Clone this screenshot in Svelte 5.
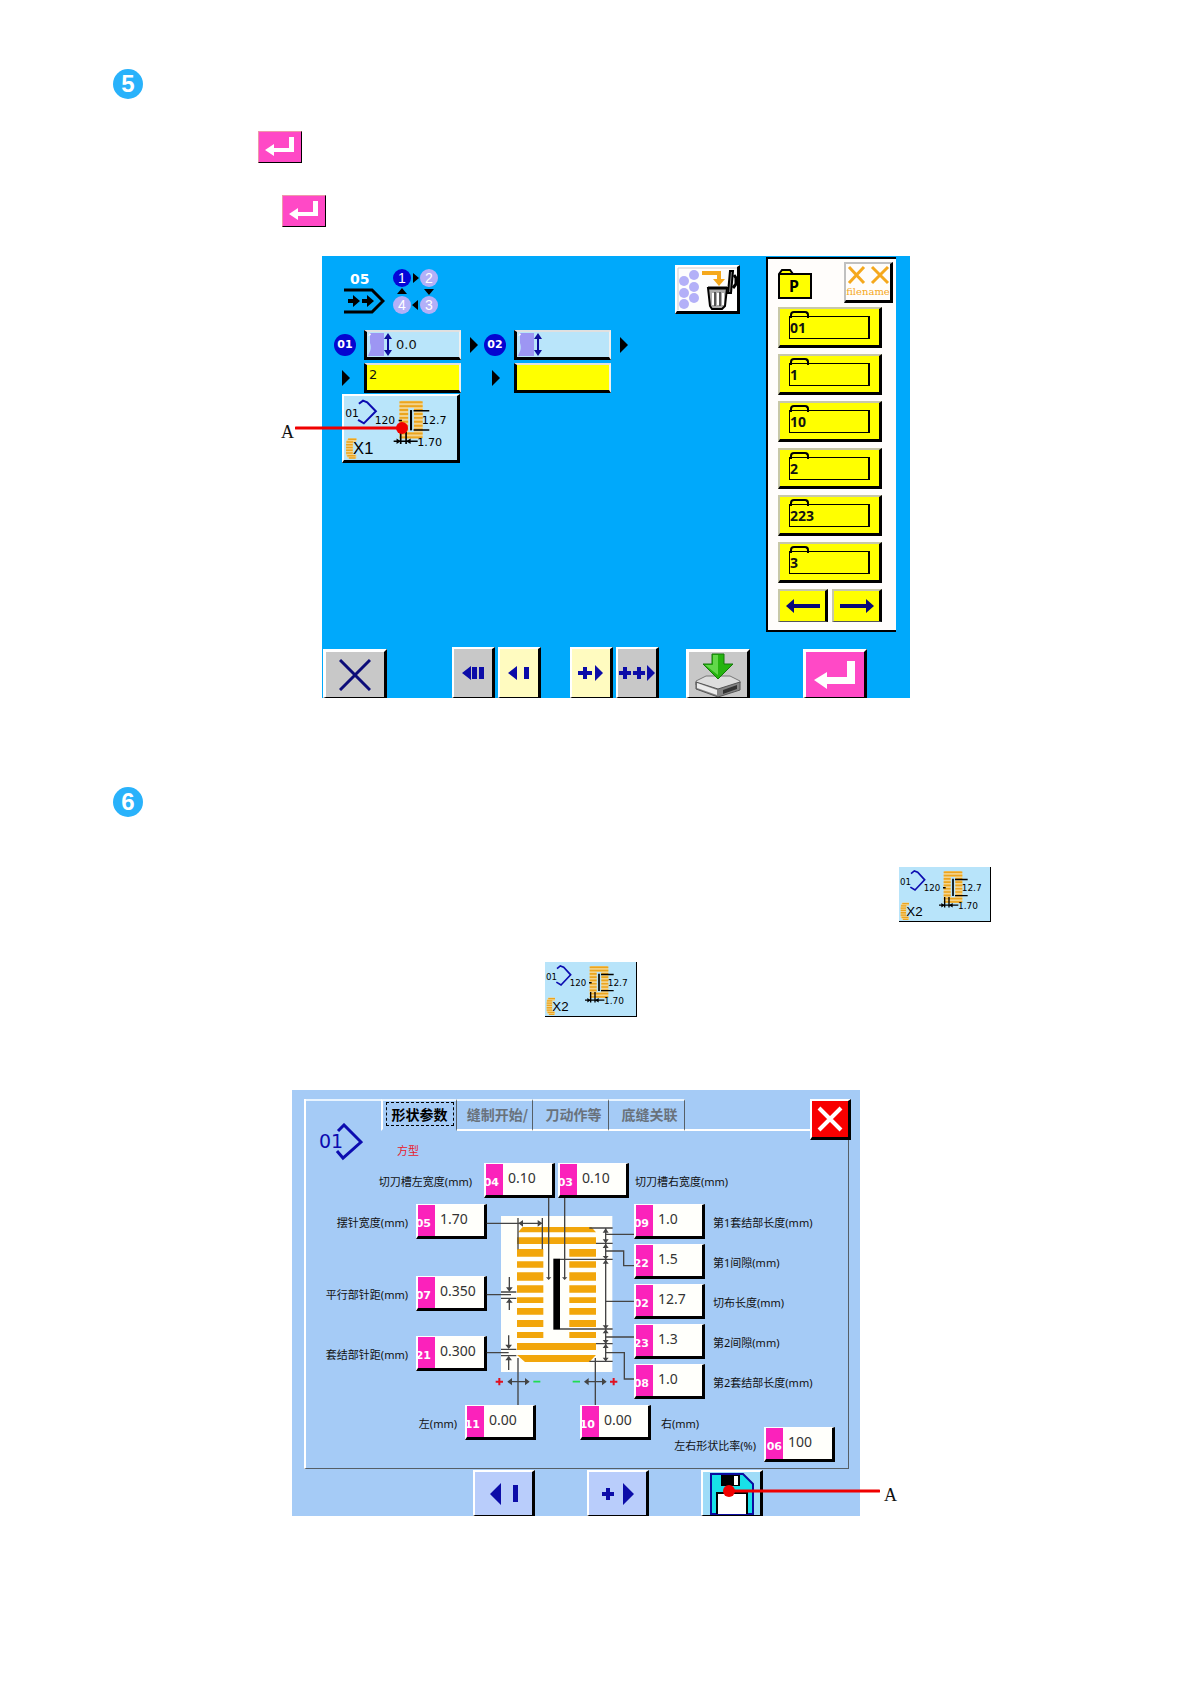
<script>
  const folders = ["01", "1", "10", "2", "223", "3"];
  const steps = [
    { no: "01", shift: "0.0", pattern: "2" },
    { no: "02", shift: "", pattern: "" },
  ];
  const tabs = ["形状参数", "缝制开始/", "刀动作等", "底缝关联"];

  const top = [
    { code: "04", name: "切刀槽左宽度(mm)", value: "0.10" },
    { code: "03", name: "切刀槽右宽度(mm)", value: "0.10" },
  ];
  const left = [
    { code: "05", name: "摆针宽度(mm)", value: "1.70" },
    { code: "07", name: "平行部针距(mm)", value: "0.350" },
    { code: "21", name: "套结部针距(mm)", value: "0.300" },
  ];
  const right = [
    { code: "09", name: "第1套结部长度(mm)", value: "1.0" },
    { code: "22", name: "第1间隙(mm)", value: "1.5" },
    { code: "02", name: "切布长度(mm)", value: "12.7" },
    { code: "23", name: "第2间隙(mm)", value: "1.3" },
    { code: "08", name: "第2套结部长度(mm)", value: "1.0" },
  ];
  const bottom = [
    { code: "11", name: "左(mm)", value: "0.00" },
    { code: "10", name: "右(mm)", value: "0.00" },
  ];
  const ratio = { code: "06", name: "左右形状比率(%)", value: "100" };

  // y and height of the short stitches on both sides of the knife
  const stitches = [
    [153, 23], [190, 19], [223, 25], [262, 22], [298, 17], [330, 20], [366, 21], [402, 18],
  ];
  const threads = [16, 26, 36, 46, 56, 66, 76, 86, 96, 106];

  let selected = $state(0);
</script>

{#snippet enterIcon()}
  <svg width="42" height="30" viewBox="0 0 42 30" aria-hidden="true">
    <path d="M6 18l9-6v4h15V5h5v15H15v4z" fill="#fff" />
  </svg>
{/snippet}

{#snippet pattern(count)}
  <svg class="pattern" viewBox="0 0 273 164" preserveAspectRatio="none" aria-hidden="true">
    <path d="M138 12h47l5 5v87l-5 5h-47l-4-5V17zM155 30v62h14V30z" fill="#f3d38c" fill-rule="evenodd" />
    {#each threads as y}
      {#if y < 30 || y > 90}
        <path d="M134 {y}h56" stroke="#eba51e" stroke-width="5" />
      {:else}
        <path d="M134 {y}h21M169 {y}h21" stroke="#eba51e" stroke-width="5" />
      {/if}
    {/each}
    <path d="M162 36v52" stroke="#000" stroke-width="5" />
    <path d="M168 38h38M168 87h38M132 63h8" stroke="#000" stroke-width="4" />
    <path d="M137 91v32M150 91v32M120 116h58" stroke="#000" stroke-width="4" />
    <path d="M137 116l-10-7v14zM150 116l11-7v14z" />
    <path d="M36 20l10-8 10 4 21 23-29 31-14-9" fill="none" stroke="#0c0cb0" stroke-width="5" />
    <path d="M10 108h20v10h-8v32h8v10H10l-5-8v-36z" fill="#f3d38c" />
    <path d="M10 111h20M6 118h16M5 125h16M5 132h16M5 139h16M5 146h16M8 153h20M12 159h16" stroke="#eba51e" stroke-width="4" />
    <text x="3" y="54" font-size="26">01</text>
    <text x="74" y="73" font-size="26">120</text>
    <text x="188" y="73" font-size="27">12.7</text>
    <text x="177" y="127" font-size="27">1.70</text>
    <text class="count" x="22" y="149" font-size="40">X{count}</text>
  </svg>
{/snippet}

{#snippet param(p, side)}
  <div class="param {side}">
    <label for="p{p.code}">{p.name}</label>
    <span class="field">
      <span class="code" class:full={p.code === "06"}>{p.code}</span>
      <input id="p{p.code}" type="text" value={p.value} />
    </span>
  </div>
{/snippet}

<main>
  <section>
    <h2 class="badge">5</h2>
    <p class="first"><button class="enter" aria-label="Enter">{@render enterIcon()}</button></p>
    <p class="second"><button class="enter" aria-label="Enter">{@render enterIcon()}</button></p>

    <figure class="cycle">
      <div class="body">
        <div class="work">
          <header>
            <div class="needle">
              <span>05</span>
              <svg width="41" height="26" viewBox="0 0 41 26" aria-hidden="true">
                <path d="M0 2h28l11 11-11 11H0" fill="none" stroke="#000" stroke-width="3" />
                <path d="M4 11h5V7l7 6-7 6v-4H4zM18 11h5V7l7 6-7 6v-4h-5z" />
              </svg>
            </div>
            <svg class="order" width="46" height="47" viewBox="0 0 46 47" aria-hidden="true">
              <circle cx="9" cy="10" r="9" fill="#0505d8" />
              <circle cx="36" cy="10" r="9" fill="#b3b0f8" />
              <circle cx="36" cy="37" r="9" fill="#b3b0f8" />
              <circle cx="9" cy="37" r="9" fill="#b3b0f8" />
              <path d="M20 5l6 5-6 5zM31 21h10l-5 6zM25 32v10l-6-5zM4 26h10l-5-6z" />
              <text x="9" y="15">1</text>
              <text x="36" y="15">2</text>
              <text x="36" y="42">3</text>
              <text x="9" y="42">4</text>
            </svg>
            <button class="bevel trash" aria-label="Delete all">
              <svg width="61" height="44" viewBox="0 0 61 44">
                <path d="M1 43V1h59" fill="none" stroke="#d0cdd0" />
                {#each [[7, 14], [17, 8], [7, 26], [17, 20], [7, 37], [17, 31]] as [cx, cy]}
                  <circle {cx} {cy} r="5" fill="#b3b0f8" />
                {/each}
                <path d="M25 6h17v6" fill="none" stroke="#f5a81c" stroke-width="4" />
                <path d="M36 12h12l-6 7z" fill="#f5a81c" />
                <path d="M31 21h19l-2 18-3 3H35l-2-3z" fill="#aaa" stroke="#000" stroke-width="2" />
                <path d="M31 21h19" stroke="#000" stroke-width="3" />
                <path d="M36 26v12M41 26v12M46 26v12" stroke="#fff" stroke-width="2" />
                <path d="M38 25v14M43 25v14" stroke="#000" />
                <path d="M53 4h3l-2 22h-3z" fill="#888" stroke="#000" stroke-width="2" />
                <path d="M57 8l2 3v6l-3 4" fill="none" stroke="#000" stroke-width="3" />
              </svg>
            </button>
          </header>

          <div class="steps">
            {#each steps as s}
              <div class="step">
                <span class="no">{s.no}</span>
                <button class="well shift">
                  <svg width="26" height="26" viewBox="0 0 26 26" aria-hidden="true">
                    <path d="M3 1h14v23H1c2-5 4-7 2-13z" fill="#9d96f3" />
                    <path d="M1 4l2-3 1 2z" fill="#fff" />
                    <path d="M21 1l4 6h-3v11h3l-4 6-4-6h3V7h-3z" fill="#0c0c9c" />
                  </svg>
                  {s.shift}
                </button>
                <svg width="9" height="18" viewBox="0 0 9 18" aria-hidden="true"><path d="M1 1l8 8-8 8z" /></svg>
                <svg width="9" height="18" viewBox="0 0 9 18" aria-hidden="true"><path d="M1 1l8 8-8 8z" /></svg>
                <button class="well name" aria-label="Pattern {s.no}">{s.pattern}</button>
              </div>
            {/each}
          </div>
          <button class="bevel sewing" aria-label="Pattern data">{@render pattern(1)}</button>
        </div>

        <aside>
          <div class="head">
            <svg width="34" height="30" viewBox="0 0 34 30" aria-hidden="true">
              <path d="M1 29V5l3-4h8l3 4h18v24z" fill="#ff0" stroke="#000" stroke-width="2" />
              <path d="M1 5h14" stroke="#000" stroke-width="2" />
              <text x="11" y="23">P</text>
            </svg>
            <button class="bevel file">
              <svg width="44" height="20" viewBox="0 0 44 20" aria-hidden="true">
                <path d="M3 2l15 16M18 2L3 18M26 2l16 16M42 2L26 18" fill="none" stroke="#f5a81c" stroke-width="3" />
              </svg>
              filename
            </button>
          </div>
          <div class="folders">
            {#each folders as name}
              <button class="bevel folder"><span>{name}</span></button>
            {/each}
            <div class="pages">
              <button class="bevel" aria-label="Previous page">
                <svg width="34" height="14" viewBox="0 0 34 14"><path d="M0 7l8-7v5h26v4H8v5z" fill="#080878" /></svg>
              </button>
              <button class="bevel" aria-label="Next page">
                <svg width="34" height="14" viewBox="0 0 34 14"><path d="M34 7l-8-7v5H0v4h26v5z" fill="#080878" /></svg>
              </button>
            </div>
          </div>
        </aside>
      </div>

      <footer>
        <div>
          <button class="bevel wide" aria-label="Cancel">
            <svg width="32" height="32" viewBox="0 0 32 32"><path d="M1 1l30 30M31 1L1 31" stroke="#0c0c78" stroke-width="3" /></svg>
          </button>
        </div>
        <div>
          <button class="bevel tall" aria-label="First">
            <svg width="22" height="14" viewBox="0 0 22 14"><path d="M0 7l9-7v14zM10 1h5v12h-5zM17 1h5v12h-5z" fill="#0c0ca8" /></svg>
          </button>
          <button class="bevel tall cream" aria-label="Previous">
            <svg width="22" height="14" viewBox="0 0 22 14"><path d="M0 7l9-7v14zM16 1h5v12h-5z" fill="#0c0ca8" /></svg>
          </button>
        </div>
        <div>
          <button class="bevel tall cream" aria-label="Next">
            <svg width="26" height="16" viewBox="0 0 26 16"><path d="M0 6h5V2h4v4h5v4H9v4H5v-4H0zM17 0l8 8-8 8z" fill="#0c0ca8" /></svg>
          </button>
          <button class="bevel tall" aria-label="Last">
            <svg width="36" height="16" viewBox="0 0 36 16">
              <path d="M0 6h4V2h4v4h4v4H8v4H4v-4H0zM14 6h4V2h4v4h4v4h-4v4h-4v-4h-4zM28 0l8 8-8 8z" fill="#0c0ca8" />
            </svg>
          </button>
        </div>
        <div>
          <button class="bevel wide" aria-label="Save">
            <svg width="48" height="44" viewBox="0 0 48 44">
              <path d="M2 28l10-5h24l10 5v2l-22 7L2 32z" fill="#ddd" stroke="#777" />
              <path d="M2 29l22 7 22-7v8l-22 7L2 36z" fill="#858585" stroke="#555" />
              <path d="M3 30l20 7v5L3 35z" fill="#ececec" />
              <path d="M29 37l14-5v4l-14 5z" fill="#333" />
              <path d="M18 1h12v10h9L24 26 9 11h9z" fill="#25b40f" stroke="#14780a" />
              <path d="M19 2h5v20L11 12h8z" fill="#62d84a" />
            </svg>
          </button>
        </div>
        <div>
          <button class="bevel wide pink" aria-label="Enter">
            <svg width="42" height="28" viewBox="0 0 42 28"><path d="M0 19l13-8v5h20V0h8v23H13v5z" fill="#fff" /></svg>
          </button>
        </div>
      </footer>

      <div class="callout from-left">
        <span>A</span>
        <svg width="114" height="14" viewBox="0 0 114 14" aria-hidden="true">
          <path d="M1 7h106" stroke="#f00000" stroke-width="3" stroke-linecap="round" />
          <circle cx="107" cy="7" r="6" fill="#f00000" />
        </svg>
      </div>
    </figure>
  </section>

  <section class="edit">
    <h2 class="badge">6</h2>
    <p class="third"><span class="thumb">{@render pattern(2)}</span></p>
    <p class="fourth"><span class="thumb">{@render pattern(2)}</span></p>

    <figure class="dialog">
      <div class="frame">
        <div class="bar">
          <div class="corner">
            <svg width="44" height="38" viewBox="0 0 44 38" aria-hidden="true">
              <path d="M19 8l6-6 17 17-18 16-6-7" fill="none" stroke="#0c0cb0" stroke-width="3" />
              <text x="0" y="25">01</text>
            </svg>
          </div>
          <div class="tabs" role="tablist">
            {#each tabs as tab, i}
              <button role="tab" aria-selected={selected === i} class:active={selected === i} onclick={() => (selected = i)}>
                <span>{tab}</span>
              </button>
            {/each}
          </div>
          <div class="rest"></div>
          <button class="bevel close" aria-label="Close">
            <svg width="26" height="26" viewBox="0 0 26 26"><path d="M2 2l22 22M24 2L2 24" stroke="#fff" stroke-width="4" /></svg>
          </button>
        </div>

        <div class="canvas">
          <span class="kind">方型</span>
          <div class="row top">
            {@render param(top[0], "before")}
            {@render param(top[1], "after")}
          </div>
          <div class="middle">
            <div class="lefts">
              {#each left as p}
                {@render param(p, "before")}
              {/each}
            </div>
            <div class="shape">
              <svg width="160" height="200" viewBox="0 0 480 600" aria-hidden="true">
                <path d="M63 54h334v468H63z" fill="#fffffb" />
                <g fill="#f2a60a">
                  <path d="M114 103l14-16h206l14 16zM111 118h237v20H111zM111 435h237v21H111zM111 471h237l-20 21H135z" />
                  {#each stitches as [y, h]}
                    <path d="M111 {y}h79v{h}h-79zM268 {y}h80v{h}h-80z" />
                  {/each}
                </g>
                <path d="M220 182h20v213h-20z" />
                <g fill="none" stroke="#444" stroke-width="4">
                  <path d="M206 0v240M254 0v240M20 76h168M114 60v94M187 60v94" />
                  <path d="M328 90h70M348 136h50M240 184h158M240 393h158M348 437h50M328 490h70" />
                  <path d="M377 90v400M377 109h85M377 159h54v44h36M377 310h88M377 417h85M377 464h56v79h34" />
                  <path d="M88 237v38M88 302v34M63 282h46M63 301h46M20 290h73" />
                  <path d="M86 412v38M86 476v40M63 454h46M63 473h46M20 464h66" />
                  <path d="M114 480v141M346 480v141M86 551h58M316 551h60" />
                </g>
                <g fill="#444">
                  <path d="M115 76l14-10v20zM187 76l-14-10v20z" />
                  <path d="M198 238h16l-8 8zM246 238h16l-8 8z" />
                  <path d="M368 104h18l-9-13zM368 124h18l-9 12zM368 150h18l-9-13zM368 174h18l-9 10zM368 197h18l-9-12zM368 382h18l-9 11zM368 406h18l-9-12zM368 426h18l-9 11zM368 450h18l-9-12zM368 479h18l-9 11z" />
                  <path d="M78 268h20l-10 13zM78 314h20l-10-12zM76 440h20l-10 13zM76 487h20l-10-13z" />
                  <path d="M82 551l14-11v22zM149 551l-14-11v22zM312 551l14-11v22zM380 551l-14-11v22z" />
                </g>
                <path d="M47 551h22M58 540v22M390 551h22M401 540v22" stroke="#e01020" stroke-width="6" />
                <path d="M160 551h21M278 551h22" stroke="#20dc50" stroke-width="5" />
              </svg>
            </div>
            <div class="rights">
              {#each right as p}
                {@render param(p, "after")}
              {/each}
            </div>
          </div>
          <div class="row bottom">
            {@render param(bottom[0], "before")}
            {@render param(bottom[1], "after")}
          </div>
          <div class="row ratio">
            {@render param(ratio, "before")}
          </div>
        </div>
      </div>

      <div class="actions">
        <button class="bevel" aria-label="Decrease">
          <svg width="28" height="22" viewBox="0 0 28 22"><path d="M0 11L11 0v22zM23 2h5v17h-5z" fill="#0c0ca8" /></svg>
        </button>
        <button class="bevel" aria-label="Increase">
          <svg width="32" height="22" viewBox="0 0 32 22"><path d="M0 9h4V5h4v4h4v4H8v4H4v-4H0zM21 0l11 11-11 11z" fill="#0c0ca8" /></svg>
        </button>
        <button class="bevel disk" aria-label="Save">
          <svg width="44" height="42" viewBox="0 0 44 42">
            <path d="M1 1h32l10 10v30H1z" fill="#18e0e8" stroke="#0c0ca0" stroke-width="2" />
            <path d="M11 2h19v11H11z" />
            <path d="M24 3h4v9h-4zM8 20h29v21H8z" fill="#fff" />
            <path d="M7 41V20h30v21" fill="none" stroke="#000" stroke-width="2" />
          </svg>
        </button>
      </div>

      <div class="callout from-right">
        <svg width="158" height="14" viewBox="0 0 158 14" aria-hidden="true">
          <path d="M7 7h150" stroke="#f00000" stroke-width="3" stroke-linecap="round" />
          <circle cx="7" cy="7" r="6" fill="#f00000" />
        </svg>
        <span>A</span>
      </div>
    </figure>
  </section>
</main>

<style>
  :global(body) {
    background: #fff;
  }
  main {
    padding: 69px 16px 167px 113px;
    font-family: "Noto Sans", "Noto Sans CJK SC", sans-serif;
    color: #111;
  }
  main * {
    box-sizing: border-box;
  }
  svg {
    display: block;
    flex: none;
  }
  button {
    display: flex;
    align-items: center;
    justify-content: center;
    margin: 0;
    padding: 0;
    font: inherit;
    color: inherit;
    cursor: pointer;
  }
  p,
  figure,
  h2 {
    margin: 0;
  }
  .badge {
    width: 30px;
    height: 30px;
    border-radius: 50%;
    background: #29b2fb;
    color: #fff;
    font: bold 24px/30px "Liberation Sans", sans-serif;
    text-align: center;
  }
  .first {
    padding: 32px 0 0 145px;
  }
  .second {
    padding: 32px 0 0 169px;
  }
  .third {
    padding: 50px 0 0 786px;
  }
  .fourth {
    padding: 40px 0 0 432px;
  }
  .edit {
    padding-top: 89px;
  }
  .enter {
    width: 44px;
    height: 32px;
    background: #ff49c6;
    border: 1px solid #e9a;
    border-right-color: #000;
    border-bottom-color: #000;
  }
  .thumb {
    display: block;
    width: 92px;
    height: 55px;
    background: #b8e4fa;
    border-right: 1px solid #000;
    border-bottom: 1px solid #000;
  }
  .pattern {
    width: 100%;
    height: 100%;
    font-family: "DejaVu Sans", sans-serif;
  }
  .pattern .count {
    font-family: "Liberation Sans", sans-serif;
  }
  .bevel {
    background: #c8c8c8;
    border: solid;
    border-width: 2px 3px 3px 2px;
    border-color: #fff #000 #000 #fff;
  }

  /* cycle screen */
  .cycle {
    position: relative;
    width: 100%;
    max-width: 588px;
    margin: 29px 0 0 209px;
    background: #00a9fb;
  }
  .body {
    display: flex;
    padding: 1px 14px 0 0;
  }
  .work {
    flex: 1;
    padding-top: 8px;
  }
  header {
    display: flex;
    align-items: flex-start;
    height: 65px;
    padding-left: 22px;
  }
  .needle {
    width: 49px;
    padding-top: 5px;
  }
  .needle span {
    display: block;
    padding-left: 6px;
    color: #fff;
    font: bold 14px/18px "DejaVu Sans", sans-serif;
  }
  .order {
    margin-top: 3px;
    fill: #000;
  }
  .order text {
    fill: #fff;
    font: 14px "Liberation Sans", sans-serif;
    text-anchor: middle;
  }
  .trash {
    width: 65px;
    height: 49px;
    margin: 0 26px 0 auto;
    background: #fdfdfd;
  }
  .steps {
    display: flex;
    gap: 6px;
    padding-left: 12px;
  }
  .step {
    display: grid;
    grid-template-columns: 22px 97px 9px;
    gap: 3px 8px;
    align-items: center;
    justify-items: center;
  }
  .no {
    width: 22px;
    height: 22px;
    border-radius: 50%;
    background: #0505d0;
    color: #fff;
    font: bold 11px/22px "DejaVu Sans", sans-serif;
    text-align: center;
  }
  .well {
    width: 97px;
    height: 30px;
    justify-content: flex-start;
    border: solid;
    border-width: 2px 2px 3px 3px;
    border-color: #e0e0e0 #f0f0f0 #000 #000;
    font: 13px/16px "DejaVu Sans", sans-serif;
  }
  .shift {
    gap: 3px;
    background: #b9e5fa;
  }
  .name {
    align-items: flex-start;
    padding: 2px;
    background: #ff0;
  }
  .sewing {
    width: 118px;
    height: 69px;
    margin: 1px 0 0 20px;
    background: #b9e5fa;
  }
  aside {
    width: 130px;
    padding: 3px 0 8px;
    background: #fffdfb;
    border: 2px solid #000;
    border-right: 0;
  }
  .head {
    display: flex;
    justify-content: space-between;
    padding: 0 3px 4px 10px;
  }
  .head > svg {
    margin-top: 7px;
  }
  .head text {
    font: bold 16px "Noto Sans", sans-serif;
  }
  .file {
    flex-direction: column;
    width: 49px;
    height: 41px;
    background: #fffdfb;
    border-color: #c0c0c0 #000 #000 #c0c0c0;
    color: #f5a81c;
    font: 10px/14px "DejaVu Serif", serif;
  }
  .folders {
    display: flex;
    flex-direction: column;
    gap: 6px;
    padding: 0 14px 0 10px;
  }
  .folder {
    height: 41px;
    background: #ff0;
    border-color: #c8c8a8 #000 #000 #c8c8a8;
  }
  .folder span {
    position: relative;
    width: 81px;
    height: 23px;
    border: 1px solid #000;
    border-right-width: 2px;
    font: bold 14px/21px "Noto Sans", sans-serif;
    text-align: left;
  }
  .folder span::before {
    content: "";
    position: absolute;
    left: 0;
    top: -6px;
    width: 15px;
    height: 5px;
    border: 2px solid #000;
    border-bottom: 0;
    border-radius: 4px 4px 0 0;
  }
  .pages {
    display: flex;
    gap: 4px;
  }
  .pages button {
    flex: 1;
    height: 33px;
    background: #ff0;
    border-width: 2px 3px 1px 2px;
    border-color: #c8c8a8 #000 #555 #c8c8a8;
  }
  footer {
    display: grid;
    grid-template-columns: 129px 118px 116px 117px 1fr;
    padding: 15px 0 0 1px;
  }
  footer div {
    display: flex;
    align-items: flex-end;
    gap: 3px;
  }
  .wide {
    width: 64px;
    height: 49px;
    border-width: 3px 3px 1px 3px;
  }
  .tall {
    width: 43px;
    height: 51px;
    border-width: 2px 3px 1px 2px;
  }
  .cream {
    background: #fffbc0;
  }
  .pink {
    background: #ff49c6;
  }
  .callout {
    position: absolute;
    display: flex;
    align-items: center;
    font: 18px/24px "Liberation Serif", serif;
    pointer-events: none;
  }
  .callout svg {
    margin-bottom: 8px;
  }
  .from-left {
    top: 164px;
    left: -41px;
    gap: 1px;
  }
  .from-right {
    top: 393px;
    right: -37px;
    gap: 4px;
  }

  /* parameter dialog */
  .dialog {
    position: relative;
    width: 100%;
    max-width: 568px;
    margin: 73px 0 0 179px;
    padding: 9px 11px 0 12px;
    background: #a5cbf6;
  }
  .frame {
    border: solid;
    border-width: 0 1px 1px 2px;
    border-color: #fff #565f66 #565f66 #fff;
  }
  .bar {
    display: flex;
    align-items: flex-start;
    height: 32px;
  }
  .corner {
    width: 75px;
    height: 32px;
    padding: 22px 0 0 13px;
    border-top: 2px solid #e8f4ff;
  }
  .corner text {
    font: 19px "DejaVu Sans", sans-serif;
    fill: #0c0cb0;
  }
  .tabs {
    display: flex;
  }
  .tabs button {
    width: 76px;
    height: 32px;
    padding: 0 0 2px 6px;
    background: none;
    border: solid;
    border-width: 2px 1px 2px 0;
    border-color: #e8f4ff #565f66 #fff #fff;
    color: #69727c;
    font: bold 14px/22px "Noto Sans CJK SC", sans-serif;
    white-space: nowrap;
  }
  .tabs .active {
    padding: 0 0 2px;
    border-left-width: 2px;
    border-bottom-color: transparent;
    color: #000;
  }
  .tabs .active span {
    padding: 0 5px;
    outline: 1px dashed #000;
  }
  .rest {
    flex: 1;
    height: 32px;
    border-bottom: 2px solid #fff;
  }
  .close {
    width: 41px;
    height: 41px;
    margin-right: -3px;
    background: #f80000;
  }
  .canvas {
    padding: 12px 0 6px;
    font-size: 11px;
  }
  .kind {
    display: block;
    padding-left: 91px;
    color: #e8202c;
    line-height: 16px;
  }
  .row {
    display: flex;
  }
  .top {
    gap: 3px;
    padding-top: 4px;
  }
  .middle {
    display: grid;
    grid-template-columns: 181px 147px 1fr;
    padding-top: 6px;
  }
  .lefts {
    display: grid;
    grid-template-rows: 72px 60px auto;
    align-items: start;
  }
  .rights {
    display: flex;
    flex-direction: column;
    gap: 5px;
  }
  .shape {
    position: relative;
  }
  .shape svg {
    position: absolute;
    left: -7px;
    top: -6px;
    overflow: visible;
  }
  .bottom {
    gap: 44px;
    padding-top: 6px;
  }
  .ratio {
    justify-content: flex-end;
    margin-top: -13px;
    padding-right: 13px;
  }
  .param {
    display: flex;
    align-items: center;
    gap: 8px;
  }
  .param label {
    white-space: nowrap;
    line-height: 16px;
    padding-top: 3px;
  }
  .after {
    flex-direction: row-reverse;
    justify-content: flex-end;
  }
  .before {
    justify-content: flex-end;
  }
  .top .before {
    width: 249px;
    gap: 12px;
  }
  .top .after {
    gap: 6px;
  }
  .bottom .before {
    width: 230px;
  }
  .bottom .after {
    gap: 10px;
  }
  .field {
    position: relative;
    display: flex;
    width: 71px;
    height: 35px;
    background: #fffffb;
    border: solid;
    border-width: 1px 3px 3px 2px;
    border-color: #fff #000 #000 #fff;
  }
  .code {
    display: flex;
    flex: none;
    align-items: flex-end;
    justify-content: flex-end;
    width: 17px;
    padding: 0 4px 5px 0;
    background: #fb22bb;
    color: #fff;
    font: bold 11px/14px "DejaVu Sans", sans-serif;
  }
  .code.full {
    padding-right: 1px;
  }
  input {
    flex: 1;
    min-width: 0;
    margin: 0;
    padding: 0 0 3px 5px;
    border: 0;
    background: none;
    color: #333;
    font: 14px/20px "Noto Sans", sans-serif;
  }
  .actions {
    display: flex;
    gap: 52px;
    padding: 1px 0 0 169px;
  }
  .actions button {
    width: 62px;
    height: 46px;
    background: #b9cdfb;
    border-width: 2px 3px 1px 2px;
  }
  .actions .disk {
    background: #9fdcf8;
  }
</style>
